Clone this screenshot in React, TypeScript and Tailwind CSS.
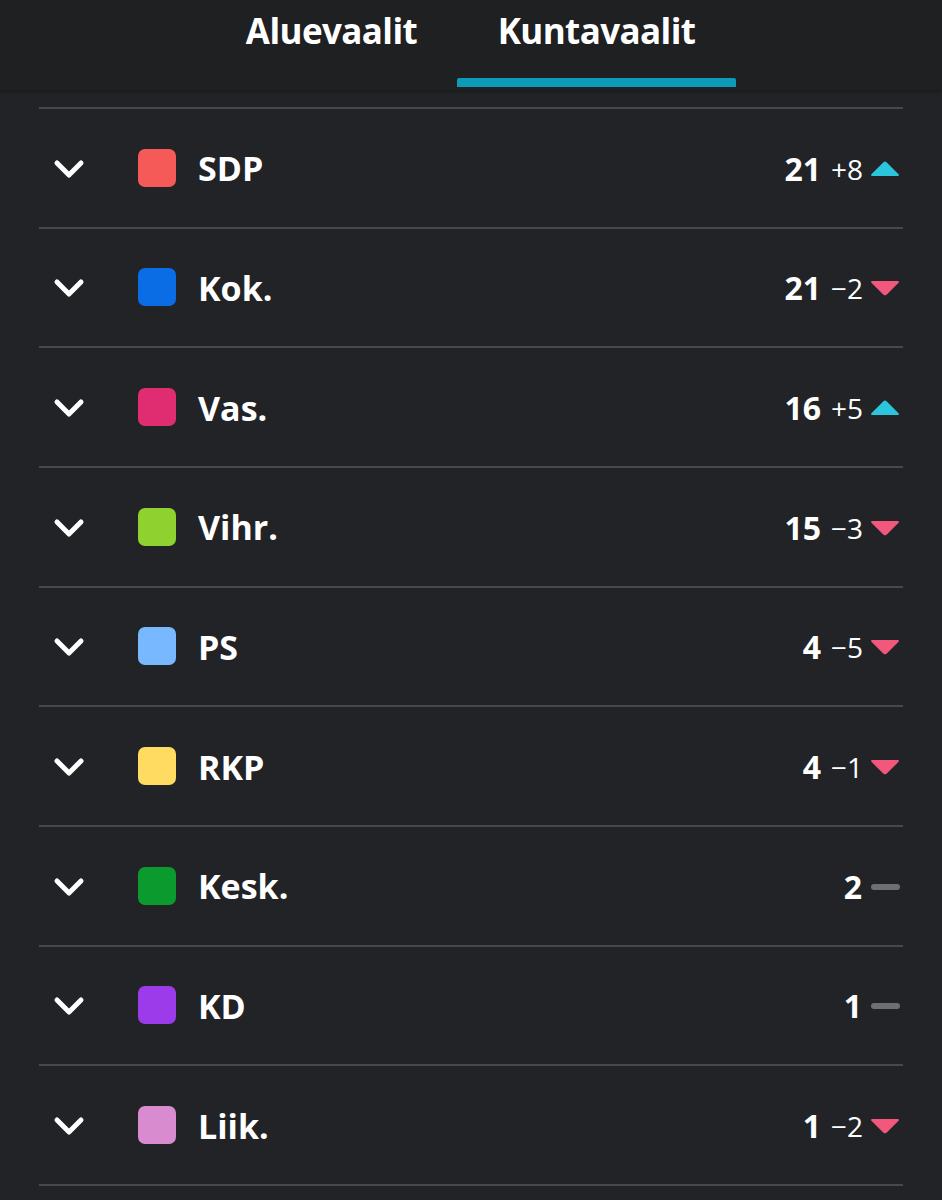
import { ChevronDown } from "lucide-react"

interface Party {
    name: string
    color: string
    seats: number
    change: number
}

const parties: Party[] = [
    { name: "SDP", color: "bg-[#f65a58]", seats: 21, change: 8 },
    { name: "Kok.", color: "bg-[#0a6de6]", seats: 21, change: -2 },
    { name: "Vas.", color: "bg-[#e02d72]", seats: 16, change: 5 },
    { name: "Vihr.", color: "bg-[#8fd12e]", seats: 15, change: -3 },
    { name: "PS", color: "bg-[#78b8ff]", seats: 4, change: -5 },
    { name: "RKP", color: "bg-[#ffdb61]", seats: 4, change: -1 },
    { name: "Kesk.", color: "bg-[#0b9a2d]", seats: 2, change: 0 },
    { name: "KD", color: "bg-[#9b3be9]", seats: 1, change: 0 },
    { name: "Liik.", color: "bg-[#d98bd0]", seats: 1, change: -2 },
]

const Trend = ({ change }: { change: number }) => {
    if (change === 0) {
        return <span className="ml-[9px] block w-[29px] h-[6px] rounded-full bg-[#6e6f72]" />
    }
    const up = change > 0
    return (
        <svg className="ml-[7px]" width="30" height="16" viewBox="0 0 30 16">
            {up
                ? <path d="M13.2 1.4 Q15 -0.2 16.8 1.4 L28.6 13.2 Q29.6 15 27.6 15 L2.4 15 Q0.4 15 1.4 13.2 Z" fill="#2bc5dd" />
                : <path d="M13.2 14.6 Q15 16.2 16.8 14.6 L28.6 2.8 Q29.6 1 27.6 1 L2.4 1 Q0.4 1 1.4 2.8 Z" fill="#f2587b" />}
        </svg>
    )
}

const PartyRow = ({ party }: { party: Party }) => {
    const sign = party.change > 0 ? "+" : "\u2212"
    return (
        <div className="h-[119.67px] border-b-2 border-[#48494c] flex items-center">
            <ChevronDown className="ml-[6px] mt-[2px] text-white" size={48} strokeWidth={2.5} />
            <span className={`ml-[45px] w-[38px] h-[38px] rounded-[7px] ${party.color}`} />
            <span className="ml-[22px] mt-[2px] text-[34px] font-bold text-white">{party.name}</span>
            <div className="ml-auto mr-[3px] mt-[2px] flex items-center">
                <span className="text-[32px] font-bold text-white">{party.seats}</span>
                {party.change !== 0 && (
                    <span className="ml-[10px] text-[28px] text-white">{sign}{Math.abs(party.change)}</span>
                )}
                <Trend change={party.change} />
            </div>
        </div>
    )
}

export default function App() {
    return (
        <div className="min-h-[1200px] bg-[#222326] font-['Open_Sans','Noto_Sans',sans-serif]">
            <div className="h-[90px] bg-[#1f2022] shadow-[0_2px_3px_rgba(0,0,0,0.25)] flex justify-center">
                <div className="flex h-full">
                    <div className="w-[251px] flex flex-col items-center">
                        <span className="mt-[5px] text-[35px] font-bold text-white tracking-[-0.6px]">Aluevaalit</span>
                    </div>
                    <div className="w-[279px] flex flex-col items-center">
                        <span className="mt-[5px] text-[35px] font-bold text-white tracking-[-0.6px]">Kuntavaalit</span>
                        <span className="mt-auto mb-[3px] w-full h-[9px] rounded-t-[2px] bg-[#0c9cb7]" />
                    </div>
                </div>
            </div>
            <div className="mx-[39px] mt-[17px] border-t-2 border-[#48494c]">
                {parties.map((p, i) => (
                    <PartyRow key={i} party={p} />
                ))}
            </div>
        </div>
    )
}
